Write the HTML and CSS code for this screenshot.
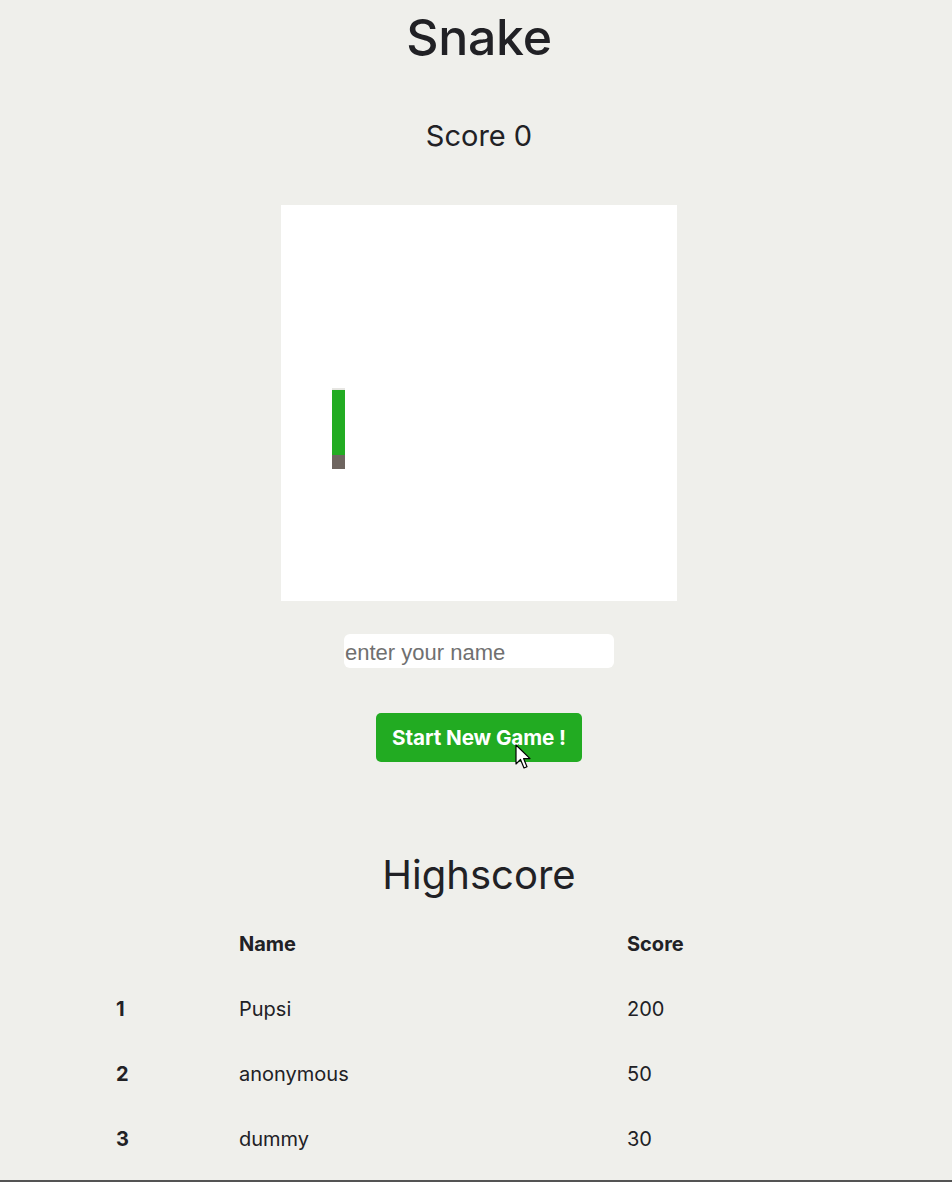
FILE: index.html
```html
<!DOCTYPE html>
<html lang="en">
<head>
<meta charset="utf-8">
<title>Snake</title>
<link rel="stylesheet" href="styles.css">
</head>
<body>
<main class="page">
  <section class="game">
    <h1 class="title">Snake</h1>
    <div class="score">Score 0</div>
    <div class="board">
      <div class="snake-body"></div>
      <div class="snake-tail"></div>
    </div>
    <input class="name-input" type="text" placeholder="enter your name">
    <div class="btn-wrap">
      <button class="start-btn">Start New Game !</button>
      <svg class="cursor" width="18" height="28" viewBox="0 0 18 28" aria-hidden="true">
        <path d="M1 1 L1 20 L5.5 15.5 L9 24 L12 22.8 L8.6 14.6 L15 14.6 Z" fill="#fff" stroke="#000" stroke-width="1.2" stroke-linejoin="round"/>
      </svg>
    </div>
    <h2 class="hs-title">Highscore</h2>
  </section>
  <table class="hs-table">
    <thead>
      <tr><th></th><th>Name</th><th>Score</th></tr>
    </thead>
    <tbody>
      <tr><th>1</th><td>Pupsi</td><td>200</td></tr>
      <tr><th>2</th><td>anonymous</td><td>50</td></tr>
      <tr><th>3</th><td>dummy</td><td>30</td></tr>
    </tbody>
  </table>
</main>
<div class="bottom-line"></div>
</body>
</html>
```

FILE: styles.css
```css
html, body {
  margin: 0;
  padding: 0;
  background: #efefeb;
  color: #212125;
  font-family: Inter, "Noto Sans", sans-serif;
  height: 1182px;
  overflow: hidden;
  position: relative;
}

.page {
  display: flex;
  flex-direction: column;
  align-items: center;
}

.game {
  display: flex;
  flex-direction: column;
  align-items: center;
  align-self: stretch;
  padding-left: 6px;
}

.title {
  margin: 6px 0 0;
  font-size: 50px;
  font-weight: 500;
  line-height: 62px;
  letter-spacing: -0.3px;
}

.score {
  margin-top: 51px;
  font-size: 29px;
  font-weight: 400;
  line-height: 34px;
}

.board {
  position: relative;
  margin-top: 52px;
  width: 396px;
  height: 396px;
  background: #ffffff;
}

.snake-body {
  position: absolute;
  left: 51px;
  top: 183px;
  width: 13px;
  height: 67px;
  background: #22ac22;
  border-top: 2px solid #e6e6e2;
  box-sizing: border-box;
}

.snake-tail {
  position: absolute;
  left: 51px;
  top: 250px;
  width: 13px;
  height: 14px;
  background: #6e6560;
}

.name-input {
  margin-top: 33px;
  width: 270px;
  height: 34px;
  box-sizing: border-box;
  border: none;
  border-radius: 6px;
  background: #ffffff;
  padding: 3px 0 0 1px;
  font-family: "Liberation Sans", Arial, sans-serif;
  font-size: 22px;
  color: #333;
  outline: none;
}

.name-input::placeholder {
  color: #707070;
}

.btn-wrap {
  position: relative;
  margin-top: 45px;
}

.start-btn {
  display: block;
  width: 206px;
  height: 49px;
  border: none;
  border-radius: 5px;
  background: #22ab22;
  color: #ffffff;
  font-family: Inter, "Noto Sans", sans-serif;
  font-size: 20.7px;
  font-weight: 700;
  letter-spacing: -0.1px;
  padding: 0;
}

.cursor {
  position: absolute;
  left: 139px;
  top: 31px;
}

.hs-title {
  margin: 88px 0 0;
  font-size: 40px;
  font-weight: 400;
  line-height: 50px;
}

.hs-table {
  margin-top: 11px;
  width: 752px;
  border-collapse: collapse;
  font-size: 20px;
  table-layout: fixed;
}

.hs-table th,
.hs-table td {
  text-align: left;
  padding: 0 0 0 16px;
  height: 65px;
  color: #212125;
}

.hs-table th {
  font-weight: 700;
}

.hs-table td {
  font-weight: 400;
}

.hs-table th:nth-child(1) { width: 107px; }
.hs-table th:nth-child(2) { width: 372px; }

.bottom-line {
  position: absolute;
  left: 0;
  right: 0;
  bottom: 0;
  height: 2px;
  background: #545454;
}
```
